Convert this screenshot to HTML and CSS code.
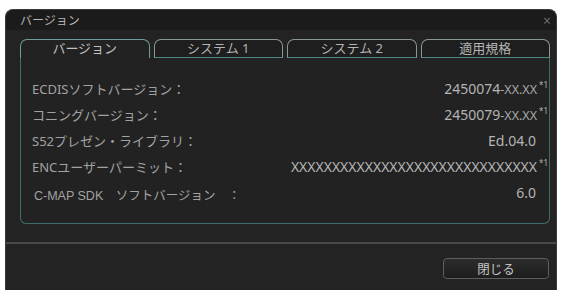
FILE: index.html
```html
<!DOCTYPE html>
<html lang="ja">

<head>
    <meta charset="UTF-8">
    <meta name="viewport" content="width=device-width, initial-scale=1.0">
    <title>バージョン</title>
    <link rel="stylesheet" href="styles.css">
</head>

<body>
    <div class="window">
        <div class="titlebar">
            <span class="title">バージョン</span>
            <span class="close">×</span>
        </div>
        <div class="tabs">
            <div class="tab active">バージョン</div>
            <div class="tab">システム 1</div>
            <div class="tab">システム 2</div>
            <div class="tab">適用規格</div>
        </div>
        <div class="panel">
            <div class="row">
                <span class="label">ECDISソフトバージョン：</span>
                <span class="value">2450074<small>-XX.XX</small><sup>*1</sup></span>
            </div>
            <div class="row">
                <span class="label">コニングバージョン：</span>
                <span class="value">2450079<small>-XX.XX</small><sup>*1</sup></span>
            </div>
            <div class="row">
                <span class="label">S52プレゼン・ライブラリ：</span>
                <span class="value">Ed.04.0</span>
            </div>
            <div class="row">
                <span class="label">ENCユーザーパーミット：</span>
                <span class="value">XXXXXXXXXXXXXXXXXXXXXXXXXXXXXX<sup>*1</sup></span>
            </div>
            <div class="row">
                <span class="label cmap">C-MAP SDK　ソフトバージョン　：</span>
                <span class="value">6.0</span>
            </div>
        </div>
        <div class="footer">
            <button class="btn">閉じる</button>
        </div>
    </div>
</body>

</html>
```

FILE: styles.css
```css
body {
    margin: 0;
    background-color: #ffffff;
    font-family: "Noto Sans", "Noto Sans CJK JP", sans-serif;
}

.window {
    margin: 9px 5px 0 5px;
    height: 281px;
    box-sizing: border-box;
    background-color: #232323;
    border: 1px solid #3a3a3a;
    border-bottom: none;
    border-radius: 8px 8px 0 0;
    display: flex;
    flex-direction: column;
}

.titlebar {
    height: 20px;
    display: flex;
    align-items: center;
    justify-content: space-between;
    padding: 0 5px 0 14px;
    background-color: #1b1b1b;
    border-radius: 8px 8px 0 0;
    color: #b8b8b8;
    font-size: 12px;
}

.close {
    color: #6c6c6c;
    font-size: 14px;
}

.tabs {
    display: flex;
    gap: 4px;
    margin: 9px 6px 0 14px;
    height: 19px;
}

.tab {
    flex: 1;
    box-sizing: border-box;
    border: 1px solid #8a9796;
    border-bottom: 1px solid #4a8784;
    border-radius: 7px 7px 0 0;
    background-color: #1e1e1e;
    color: #b4b4b4;
    font-size: 13px;
    line-height: 17px;
    text-align: center;
}

.tab.active {
    border-color: #6e9d99;
    border-bottom: none;
    background-color: #222222;
    height: 20px;
    color: #c0c0c0;
}

.panel {
    margin: 0 6px 0 14px;
    height: 166px;
    box-sizing: border-box;
    border: 1px solid #3e6d69;
    border-top: none;
    border-radius: 0 0 6px 6px;
    background-color: #222222;
    padding: 17px 13px 0 11px;
    display: flex;
    flex-direction: column;
}

.row {
    height: 26px;
    display: flex;
    align-items: center;
    justify-content: space-between;
    font-size: 13px;
    color: #a2a2a2;
    white-space: nowrap;
}

.label {
    flex-shrink: 0;
}

.label.cmap {
    font-family: "Liberation Sans", "Noto Sans CJK JP", sans-serif;
    font-size: 12.5px;
    padding-left: 2px;
    padding-top: 4px;
}

.value {
    color: #b4b4b4;
    font-size: 14px;
    white-space: nowrap;
}

.value small {
    font-size: 12.5px;
    color: #a8a8a8;
}

.value sup {
    font-size: 8px;
    margin-right: -12px;
    margin-left: 2px;
    vertical-align: 6px;
    line-height: 0;
}

.footer {
    margin-top: 18px;
    border-top: 2px solid #484848;
    flex: 1;
    display: flex;
    justify-content: flex-end;
    align-items: flex-start;
    padding: 14px 7px 0 0;
}

.btn {
    width: 106px;
    height: 21px;
    border: 1px solid #5e5e5e;
    border-radius: 4px;
    background: linear-gradient(#2c2c2c, #1d1d1d);
    color: #c4c4c4;
    font-family: "Noto Sans CJK JP", sans-serif;
    font-size: 12.5px;
    line-height: 18px;
    padding: 0;
}
```
